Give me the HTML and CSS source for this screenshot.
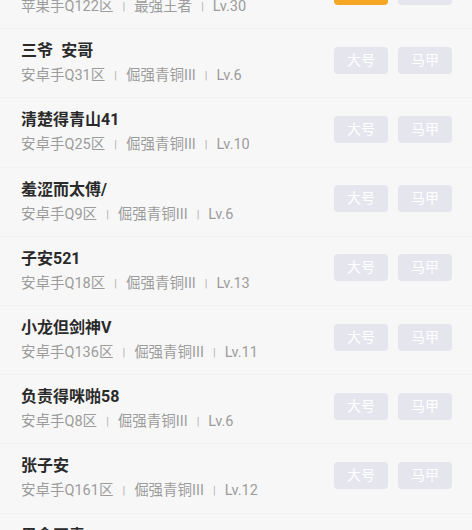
FILE: index.html
```html
<!DOCTYPE html>
<html lang="zh-CN">
<head>
<meta charset="utf-8">
<link rel="stylesheet" href="styles.css">
</head>
<body>
<ul class="list">
  <li class="row">
    <div class="info"><div class="name">王者归来</div><div class="sub">苹果手Q122区<span class="sep">|</span>最强王者<span class="sep">|</span>Lv.30</div></div>
    <div class="btns"><span class="btn btn-on">大号</span><span class="btn">马甲</span></div>
  </li>
  <li class="row">
    <div class="info"><div class="name">三爷&ensp;安哥</div><div class="sub">安卓手Q31区<span class="sep">|</span>倔强青铜III<span class="sep">|</span>Lv.6</div></div>
    <div class="btns"><span class="btn">大号</span><span class="btn">马甲</span></div>
  </li>
  <li class="row">
    <div class="info"><div class="name">清楚得青山41</div><div class="sub">安卓手Q25区<span class="sep">|</span>倔强青铜III<span class="sep">|</span>Lv.10</div></div>
    <div class="btns"><span class="btn">大号</span><span class="btn">马甲</span></div>
  </li>
  <li class="row">
    <div class="info"><div class="name">羞涩而太傅/</div><div class="sub">安卓手Q9区<span class="sep">|</span>倔强青铜III<span class="sep">|</span>Lv.6</div></div>
    <div class="btns"><span class="btn">大号</span><span class="btn">马甲</span></div>
  </li>
  <li class="row">
    <div class="info"><div class="name">子安521</div><div class="sub">安卓手Q18区<span class="sep">|</span>倔强青铜III<span class="sep">|</span>Lv.13</div></div>
    <div class="btns"><span class="btn">大号</span><span class="btn">马甲</span></div>
  </li>
  <li class="row">
    <div class="info"><div class="name">小龙但剑神V</div><div class="sub">安卓手Q136区<span class="sep">|</span>倔强青铜III<span class="sep">|</span>Lv.11</div></div>
    <div class="btns"><span class="btn">大号</span><span class="btn">马甲</span></div>
  </li>
  <li class="row">
    <div class="info"><div class="name">负责得咪啪58</div><div class="sub">安卓手Q8区<span class="sep">|</span>倔强青铜III<span class="sep">|</span>Lv.6</div></div>
    <div class="btns"><span class="btn">大号</span><span class="btn">马甲</span></div>
  </li>
  <li class="row">
    <div class="info"><div class="name">张子安</div><div class="sub">安卓手Q161区<span class="sep">|</span>倔强青铜III<span class="sep">|</span>Lv.12</div></div>
    <div class="btns"><span class="btn">大号</span><span class="btn">马甲</span></div>
  </li>
  <li class="row">
    <div class="info"><div class="name">思念正青:</div><div class="sub">安卓手Q20区<span class="sep">|</span>倔强青铜III<span class="sep">|</span>Lv.8</div></div>
    <div class="btns"><span class="btn">大号</span><span class="btn">马甲</span></div>
  </li>
</ul>
</body>
</html>
```

FILE: styles.css
```css
html, body {
  margin: 0;
  padding: 0;
  background: #f7f7f7;
  overflow: hidden;
  height: 530px;
}
body {
  font-family: Roboto, "Noto Sans CJK SC", sans-serif;
}
.list {
  list-style: none;
  margin: -40px 0 0 0;
  padding: 0;
}
.row {
  height: 69.2px;
  box-sizing: border-box;
  display: flex;
  align-items: center;
  justify-content: space-between;
  padding: 0 20px 0 21px;
  border-bottom: 1px solid #f2f2f2;
}
.info {
  display: flex;
  flex-direction: column;
  gap: 4px;
}
.name {
  font-size: 16px;
  line-height: 22px;
  font-weight: 700;
  color: #2a2a2a;
}
.sub {
  font-size: 14.5px;
  line-height: 20px;
  color: #9c9c9c;
  white-space: nowrap;
}
.sep {
  display: inline-block;
  margin: 0 9px;
  font-size: 11px;
  color: #b0b0b0;
  vertical-align: 1px;
}
.btns {
  display: flex;
  gap: 10px;
  margin-bottom: 6px;
}
.btn {
  width: 54px;
  height: 27px;
  border-radius: 4px;
  background: #e5e5ee;
  color: #ffffff;
  font-size: 14px;
  line-height: 27px;
  text-align: center;
}
.btn-on {
  background: #f5a623;
}
```
